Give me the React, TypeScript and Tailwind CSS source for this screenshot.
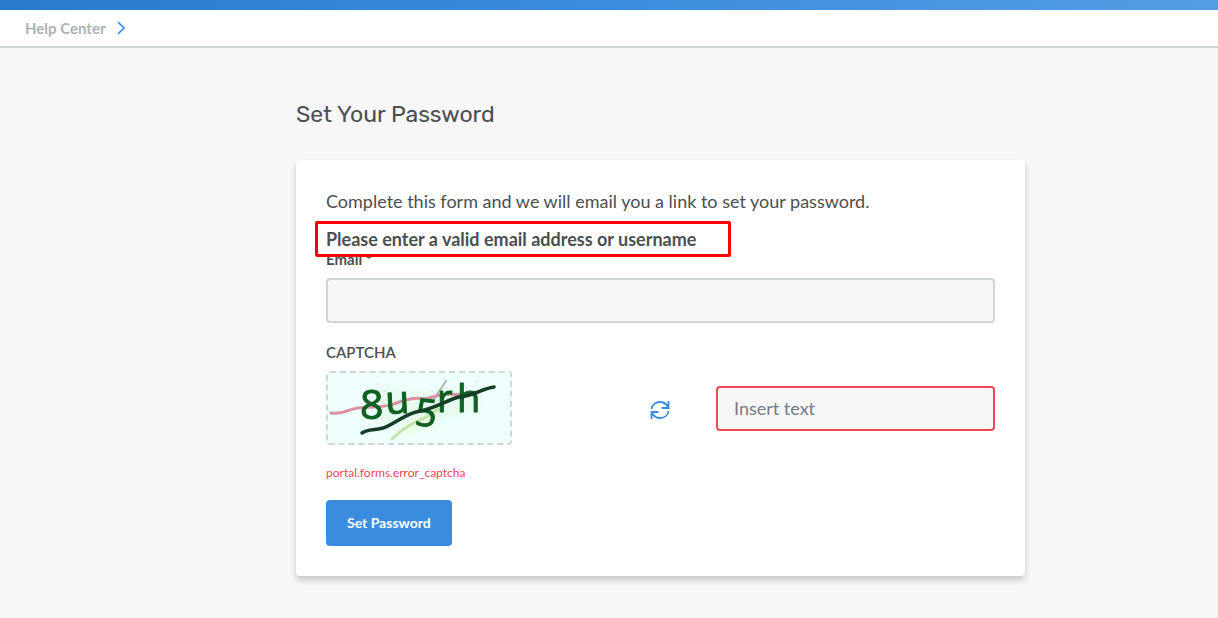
import React from "react";

function CaptchaPicture() {
  return (
    <svg
      viewBox="0 0 182 70"
      className="block h-[70px] w-full overflow-visible"
      role="img"
      aria-label="CAPTCHA characters"
    >
      <defs>
        <filter id="ink">
          <feGaussianBlur stdDeviation="0.5" />
        </filter>
        <filter id="haze">
          <feGaussianBlur stdDeviation="4" />
        </filter>
      </defs>
      <rect width="182" height="70" fill="#effffe" />
      <g filter="url(#haze)">
        <path d="M36 22 60 14 108 20 150 14 150 36 110 50 48 50Z" fill="#e6faef" />
        <path d="M66 58 80 50 100 42 108 50 80 60Z" fill="#e6fbd8" />
      </g>
      <g filter="url(#ink)" fill="none" strokeLinecap="round" strokeLinejoin="round">
        <path d="M64 66C72 58 79 53 90 48S105 40 110 36" stroke="#c4e2ac" strokeWidth="3" />
        <path d="M106 26 118 8" stroke="#a9b8a7" strokeWidth="2" />
        <path d="M3 40C14 42 18 37 30 35S57 35 66 31C78 26 88 24 98 26 114 20 123 21 137 22" stroke="#d990a0" strokeWidth="3" />
        <g
          fill="#116024"
          stroke="#116024"
          strokeWidth="1"
          fontFamily="'Open Sans', 'Noto Sans', sans-serif"
        >
          <text x="32" y="46" fontSize="41">8</text>
          <text x="58" y="41" fontSize="39" transform="rotate(-3 58 41)">u</text>
          <text x="86" y="52" fontSize="38" transform="rotate(6 86 52)">5</text>
          <text x="109" y="39" fontSize="38">r</text>
          <text x="129" y="39" fontSize="38">h</text>
        </g>
        <path d="M34 60C41 55 45 58 55 55S74 43 88 39C106 36 119 27 131 24 145 23 153 16 166 14" stroke="#123e25" strokeWidth="3.5" />
      </g>
      <g fill="#b8ddc7">
        <circle cx="50" cy="11" r=".7" /><circle cx="57" cy="18" r=".7" />
        <circle cx="109" cy="14" r=".7" /><circle cx="104" cy="18" r=".7" />
        <circle cx="61" cy="48" r=".7" /><circle cx="149" cy="9" r=".7" />
      </g>
    </svg>
  );
}

function RefreshIcon() {
  return (
    <svg
      viewBox="0 0 20 20"
      className="h-5 w-5"
      fill="none"
      stroke="currentColor"
      strokeWidth="1.8"
      aria-hidden="true"
    >
      <path d="M1.5 9C2 4.6 5.6 2 10 2c3.4 0 6.4 1.8 8 5M18.5 1v7h-7" />
      <path d="M18.5 11c-.5 4.4-4.1 7-8.5 7-3.4 0-6.4-1.8-8-5M1.5 19v-7h7" />
    </svg>
  );
}

export default function App() {
  return (
    <div className="min-h-screen bg-[#f7f7f7] font-['Lato',sans-serif] text-[#4b4f52]">
      <div className="h-[10px] bg-linear-to-r from-[#287acb] via-[#3a8dde] to-[#549de3]" />
      <nav className="flex h-[38px] items-center gap-3 border-b-2 border-[#d1d5d4] bg-white pl-[25px]">
        <a href="#help" className="text-[15px] leading-5 font-bold text-[#adb3b3]">
          Help Center
        </a>
        <svg
          viewBox="0 0 8 14"
          className="h-[14px] w-2"
          fill="none"
          stroke="#3a8dde"
          strokeWidth="1.7"
          aria-hidden="true"
        >
          <path d="m1 1 6 6-6 6" />
        </svg>
      </nav>

      <main className="pt-[50px] pr-[193px] pb-10 pl-[296px]">
        <h1 className="mb-[30px] font-['Rubik','Roboto',sans-serif] text-[23px] leading-8">
          Set Your Password
        </h1>
        <form
          className="rounded bg-white px-[30px] pt-[29px] pb-[30px] shadow-[0_4px_6px_rgba(0,0,0,0.2)]"
          onSubmit={(event) => event.preventDefault()}
          noValidate
        >
          <p className="text-lg leading-6">
            Complete this form and we will email you a link to set your password.
          </p>
          <div className="relative mt-[14px] h-6">
            <p className="text-lg leading-6 font-bold">
              Please enter a valid email address or username
            </p>
            <div className="absolute -top-[6px] -left-[11px] h-9 w-[416px] rounded-[2px] border-3 border-[#ff0000]" />
          </div>
          <label htmlFor="email" className="block text-[15px] leading-4 font-bold">
            Email *
          </label>
          <input
            id="email"
            type="email"
            className="mt-[11px] block h-[45px] w-full rounded border-2 border-[#d1d5d4] bg-[#f7f7f7] px-4 text-lg outline-none"
          />

          <label htmlFor="captcha" className="mt-[19px] block text-[15px] leading-5 font-semibold">
            CAPTCHA
          </label>
          <div className="mt-[9px] flex items-center">
            <div className="w-[186px] rounded border-2 border-dashed border-[#d1d5d4] bg-[#effffe]">
              <CaptchaPicture />
            </div>
            <button
              type="button"
              aria-label="Refresh CAPTCHA"
              className="mr-[46px] ml-auto flex h-6 w-5 items-end text-[#3a8dde]"
            >
              <RefreshIcon />
            </button>
            <input
              id="captcha"
              type="text"
              placeholder="Insert text"
              className="h-[45px] w-[279px] rounded border-2 border-[#ef4655] bg-[#f7f7f7] px-4 text-lg outline-none placeholder:text-[#757b87]"
            />
          </div>
          <p className="mt-5 text-xs leading-4 text-[#ef4655]">portal.forms.error_captcha</p>
          <button
            type="submit"
            className="mt-[19px] h-[46px] rounded bg-[#3a8dde] px-[21px] text-sm font-bold text-white"
          >
            Set Password
          </button>
        </form>
      </main>
    </div>
  );
}
